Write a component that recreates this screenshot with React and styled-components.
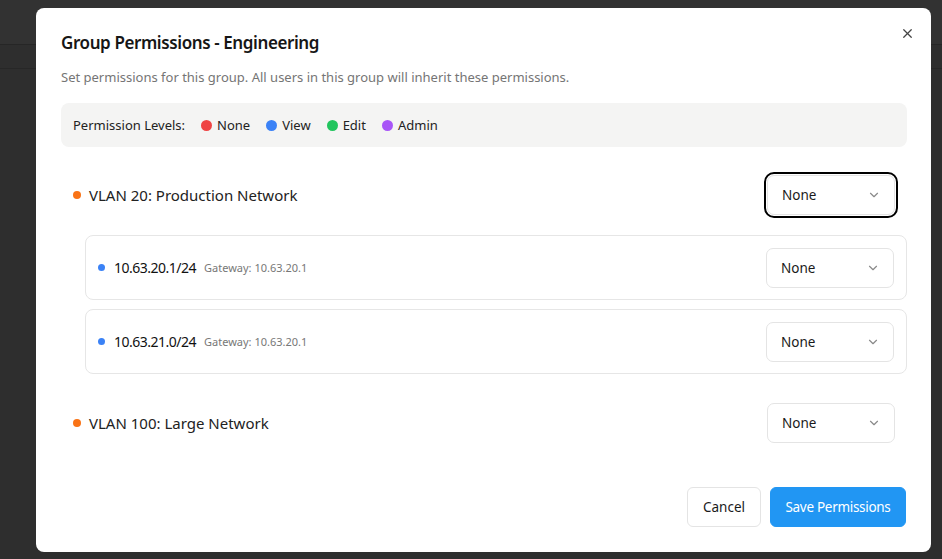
import React from "react";
import styled, { createGlobalStyle } from "styled-components";

const GlobalStyle = createGlobalStyle`
  html, body {
    margin: 0;
    padding: 0;
    background: #2e2e2e;
    font-family: "Noto Sans", "Open Sans", sans-serif;
  }
  * { box-sizing: border-box; }
`;

const levels = [
  { name: "None", color: "#ef4444" },
  { name: "View", color: "#3b82f6" },
  { name: "Edit", color: "#22c55e" },
  { name: "Admin", color: "#a855f7" },
];

const vlans = [
  {
    name: "VLAN 20: Production Network",
    focused: true,
    subnets: [
      { cidr: "10.63.20.1/24", gateway: "10.63.20.1" },
      { cidr: "10.63.21.0/24", gateway: "10.63.20.1" },
    ],
  },
  { name: "VLAN 100: Large Network", subnets: [] },
];

const Chevron = () => (
  <svg width="14" height="14" viewBox="0 0 24 24" fill="none" stroke="#8a8a8a" strokeWidth="2" strokeLinecap="round" strokeLinejoin="round">
    <path d="m6 9 6 6 6-6" />
  </svg>
);

const CloseIcon = () => (
  <svg width="15" height="15" viewBox="0 0 24 24" fill="none" stroke="#444" strokeWidth="2" strokeLinecap="round" strokeLinejoin="round">
    <path d="M18 6 6 18" />
    <path d="m6 6 12 12" />
  </svg>
);

const PermissionSelect = ({ focused }) => (
  <Select $focused={focused}>
    <span>None</span>
    <Chevron />
  </Select>
);

const App = () => {
  return (
    <>
      <GlobalStyle />
      <Backdrop>
        <Dialog>
          <CloseButton>
            <CloseIcon />
          </CloseButton>
          <Title>Group Permissions - Engineering</Title>
          <Subtitle>
            Set permissions for this group. All users in this group will inherit these permissions.
          </Subtitle>
          <Legend>
            <span>Permission Levels:</span>
            {levels.map((l) => (
              <LegendItem key={l.name}>
                <Dot $size={11} $color={l.color} />
                {l.name}
              </LegendItem>
            ))}
          </Legend>
          <VlanList>
            {vlans.map((v) => (
              <VlanSection key={v.name}>
                <VlanRow>
                  <VlanName>
                    <Dot $size={8} $color="#f97316" />
                    {v.name}
                  </VlanName>
                  <PermissionSelect focused={v.focused} />
                </VlanRow>
                {v.subnets.length > 0 && (
                  <SubnetList>
                    {v.subnets.map((s) => (
                      <SubnetCard key={s.cidr}>
                        <SubnetInfo>
                          <Dot $size={7} $color="#3b82f6" />
                          <Cidr>{s.cidr}</Cidr>
                          <Gateway>Gateway: {s.gateway}</Gateway>
                        </SubnetInfo>
                        <PermissionSelect />
                      </SubnetCard>
                    ))}
                  </SubnetList>
                )}
              </VlanSection>
            ))}
          </VlanList>
          <Footer>
            <Button $width={74}>Cancel</Button>
            <Button $primary $width={136}>Save Permissions</Button>
          </Footer>
        </Dialog>
      </Backdrop>
    </>
  );
};

export default App;

const Backdrop = styled.div`
  width: 942px;
  height: 559px;
  padding: 8px 11px 0 36px;
  background:
    linear-gradient(#262626, #262626) 0 44px / 100% 1px no-repeat,
    linear-gradient(#272727, #272727) 0 68px / 100% 1px no-repeat,
    linear-gradient(#323232, #323232) 0 0 / 100% 44px no-repeat,
    #2e2e2e;
  overflow: hidden;
`;

const Dialog = styled.div`
  position: relative;
  width: 895px;
  background: #ffffff;
  border-radius: 8px;
  padding: 24px 24px 25px 25px;
  display: flex;
  flex-direction: column;
`;

const CloseButton = styled.button`
  position: absolute;
  top: 17px;
  right: 16px;
  width: 16px;
  height: 16px;
  padding: 0;
  border: none;
  background: none;
  display: flex;
  align-items: center;
  justify-content: center;
`;

const Title = styled.h2`
  margin: 0;
  font-size: 17px;
  line-height: 22px;
  font-weight: 600;
  letter-spacing: -0.4px;
  color: #161616;
`;

const Subtitle = styled.p`
  margin: 14px 0 0;
  font-size: 13px;
  line-height: 18px;
  color: #757575;
`;

const Legend = styled.div`
  margin-top: 17px;
  height: 44px;
  background: #f4f4f3;
  border-radius: 8px;
  padding: 0 12px;
  display: flex;
  align-items: center;
  gap: 16px;
  font-size: 13px;
  color: #222;
`;

const LegendItem = styled.span`
  display: flex;
  align-items: center;
  gap: 5px;
`;

const Dot = styled.span`
  display: inline-block;
  flex-shrink: 0;
  width: ${(p) => p.$size}px;
  height: ${(p) => p.$size}px;
  border-radius: 50%;
  background: ${(p) => p.$color};
`;

const VlanList = styled.div`
  margin-top: 28px;
  display: flex;
  flex-direction: column;
  gap: 29px;
`;

const VlanSection = styled.div`
  display: flex;
  flex-direction: column;
`;

const VlanRow = styled.div`
  height: 40px;
  padding: 0 12px;
  display: flex;
  align-items: center;
  justify-content: space-between;
`;

const VlanName = styled.div`
  display: flex;
  align-items: center;
  gap: 8px;
  font-size: 15px;
  color: #222;
`;

const SubnetList = styled.div`
  margin: 20px 0 0 24px;
  display: flex;
  flex-direction: column;
  gap: 9px;
`;

const SubnetCard = styled.div`
  height: 65px;
  border: 1px solid #e6e6e6;
  border-radius: 8px;
  padding: 0 12px;
  display: flex;
  align-items: center;
  justify-content: space-between;
`;

const SubnetInfo = styled.div`
  display: flex;
  align-items: center;
`;

const Cidr = styled.span`
  margin-left: 9px;
  font-size: 14px;
  letter-spacing: -0.5px;
  color: #111;
`;

const Gateway = styled.span`
  margin-left: 8px;
  font-size: 11px;
  color: #777;
`;

const Select = styled.div`
  width: 128px;
  height: 40px;
  border: 1px solid #e4e4e4;
  border-radius: 7px;
  padding: 0 13px 0 14px;
  display: flex;
  align-items: center;
  justify-content: space-between;
  font-size: 13.5px;
  color: #1a1a1a;
  background: #fff;
  outline: ${(p) => (p.$focused ? "2px solid #000" : "none")};
  outline-offset: 1px;
`;

const Footer = styled.div`
  margin-top: 44px;
  display: flex;
  justify-content: flex-end;
  gap: 9px;
  padding-right: 1px;
`;

const Button = styled.button`
  width: ${(p) => p.$width}px;
  height: 40px;
  padding: 0;
  border-radius: 6px;
  font-family: inherit;
  font-size: 13.5px;
  letter-spacing: ${(p) => (p.$primary ? "-0.3px" : "0")};
  border: 1px solid ${(p) => (p.$primary ? "#2196f3" : "#e4e4e4")};
  background: ${(p) => (p.$primary ? "#2196f3" : "#fff")};
  color: ${(p) => (p.$primary ? "#fff" : "#1a1a1a")};
`;
